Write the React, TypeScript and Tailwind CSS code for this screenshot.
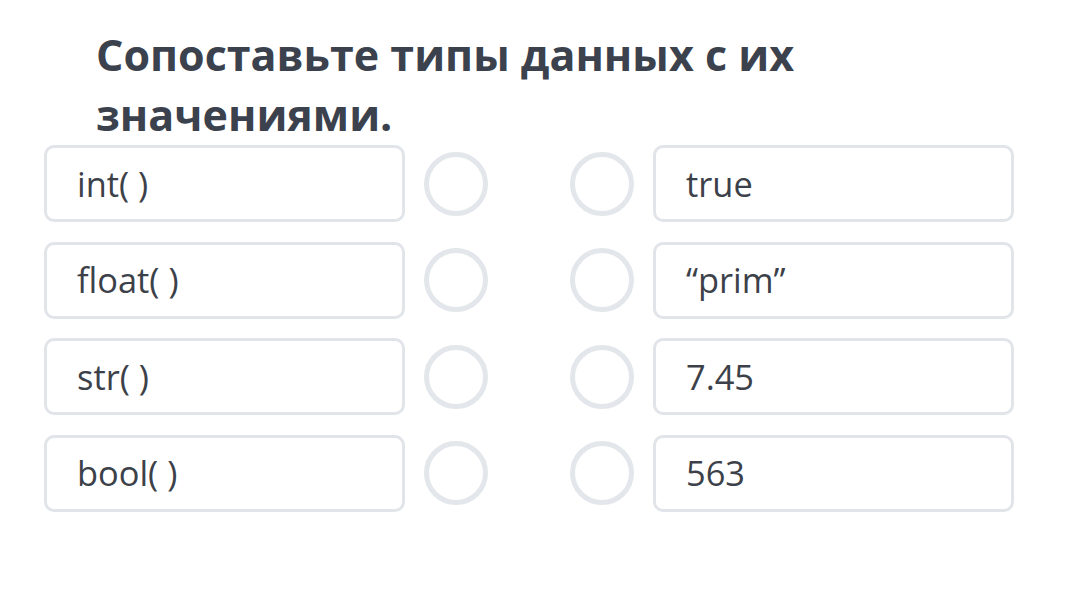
const left = ["int( )", "float( )", "str( )", "bool( )"];
const right = ["true", "\u201Cprim\u201D", "7.45", "563"];

function Card({ text }: { text: string }) {
  return (
    <div className="flex h-[77px] w-[361px] items-center rounded-[10px] border-[3px] border-[#e1e4e8] bg-white pl-[30px] text-[34.4px] text-[#3c4149]">
      {text}
    </div>
  );
}

function Dot() {
  return <div className="h-[64px] w-[64px] rounded-full border-[5px] border-[#e3e6ea]" />;
}

export default function App() {
  return (
    <div className="min-h-screen bg-white pt-[25px] font-['Open_Sans',sans-serif]">
      <h1 className="ml-[96px] w-[780px] text-[43px] font-bold leading-[60px] text-[#3b424d]">
        Сопоставьте типы данных с их значениями.
      </h1>
      <div className="ml-[44px] flex w-[970px] flex-col gap-[19.5px]">
        {left.map((l, i) => (
          <div key={l} className="flex items-center">
            <Card text={l} />
            <div className="ml-[19px]">
              <Dot />
            </div>
            <div className="ml-[82px]">
              <Dot />
            </div>
            <div className="ml-[19px]">
              <Card text={right[i]} />
            </div>
          </div>
        ))}
      </div>
    </div>
  );
}
